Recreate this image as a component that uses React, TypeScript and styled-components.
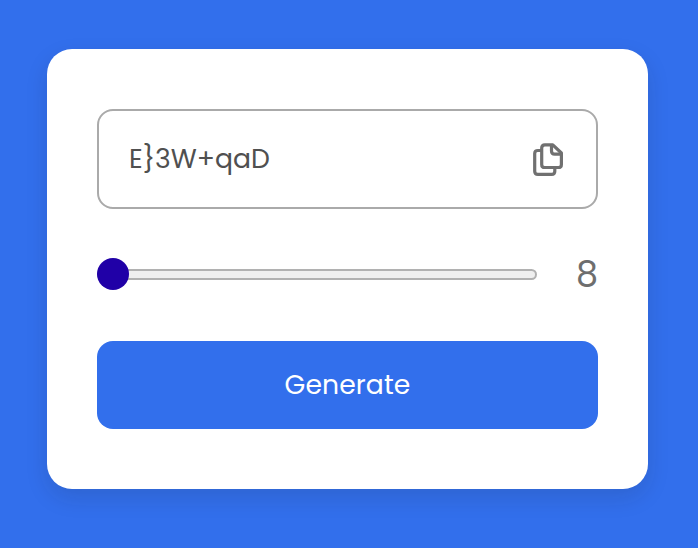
import React, { useState } from "react";
import styled, { createGlobalStyle } from "styled-components";

const GlobalStyle = createGlobalStyle`
  * { box-sizing: border-box; }
  body {
    margin: 0;
    background: #326fec;
    font-family: Poppins, Inter, sans-serif;
    font-feature-settings: "cv11" 1;
  }
`;

const Page = styled.main`
  height: 548px;
  padding: 49px 50px 0 47px;
  overflow: hidden;
`;

const Card = styled.section`
  display: flex;
  flex-direction: column;
  height: 440px;
  padding: 60px 50px;
  border-radius: 25px;
  background: #fff;
  box-shadow: 0 9px 22px rgba(32, 32, 32, 0.13);
`;

const PasswordBox = styled.div`
  display: flex;
  align-items: center;
  justify-content: space-between;
  height: 100px;
  padding: 2px 32px 0 30px;
  border: 2px solid #aaa;
  border-radius: 16px;
`;

const Password = styled.span`
  margin-top: -2px;
  font-size: 26.67px;
  font-weight: 400;
  line-height: 40px;
  color: #505050;
`;

const CopyButton = styled.button`
  display: flex;
  padding: 0;
  border: 0;
  background: none;
  color: #707070;
  cursor: pointer;
`;

const LengthRow = styled.div`
  display: flex;
  align-items: center;
  justify-content: space-between;
  height: 32px;
  margin-top: 49px;
`;

const Slider = styled.input`
  appearance: none;
  width: 440px;
  height: 11px;
  margin: 0;
  border: 2px solid #b1b1b1;
  border-radius: 6px;
  background: #efefef;
  outline: none;

  &::-webkit-slider-thumb {
    appearance: none;
    width: 32px;
    height: 32px;
    margin-left: -2px;
    border-radius: 50%;
    background: #2000a7;
  }
`;

const LengthValue = styled.span`
  padding-top: 2px;
  font-size: 35px;
  font-weight: 400;
  line-height: 32px;
  color: #6e6e6e;
`;

const GenerateButton = styled.button`
  height: 88px;
  margin-top: 51px;
  padding: 0;
  border: 0;
  border-radius: 16px;
  background: #326fec;
  color: #fff;
  font: inherit;
  font-feature-settings: inherit;
  font-size: 26.67px;
  font-weight: 400;
  letter-spacing: 0.1px;
  cursor: pointer;
`;

const CopyIcon = () => (
  <svg width="32" height="34" viewBox="0 0 32 34" fill="none" stroke="currentColor" strokeWidth="3.2" strokeLinejoin="round">
    <path d="M9 7.5H5.9Q2.7 7.5 2.7 10.5V28.3Q2.7 31.4 5.9 31.4H19.7Q22.8 31.4 22.8 28.3V25" />
    <path d="M12.8 1.8H20.8L29.4 10V21.4Q29.4 24.5 26.3 24.5H12.8Q9.7 24.5 9.7 21.4V4.9Q9.7 1.8 12.8 1.8Z" />
    <path d="M19.5 1.8V8Q19.5 11.1 22.7 11.1H29.2" />
  </svg>
);

const characters = "ABCDEFGHIJKLMNOPQRSTUVWXYZabcdefghijklmnopqrstuvwxyz0123456789+{}!?#";

export default function App() {
  const [length, setLength] = useState(8);
  const [password, setPassword] = useState("E}3W+qaD");

  const generate = () =>
    setPassword(Array.from({ length }, () => characters[Math.floor(Math.random() * characters.length)]).join(""));

  return (
    <Page>
      <GlobalStyle />
      <Card>
        <PasswordBox>
          <Password>{password}</Password>
          <CopyButton aria-label="Copy password" onClick={() => navigator.clipboard.writeText(password)}>
            <CopyIcon />
          </CopyButton>
        </PasswordBox>
        <LengthRow>
          <Slider type="range" min={8} max={20} value={length} aria-label="Password length" onChange={(e) => setLength(Number(e.target.value))} />
          <LengthValue>{length}</LengthValue>
        </LengthRow>
        <GenerateButton onClick={generate}>Generate</GenerateButton>
      </Card>
    </Page>
  );
}
